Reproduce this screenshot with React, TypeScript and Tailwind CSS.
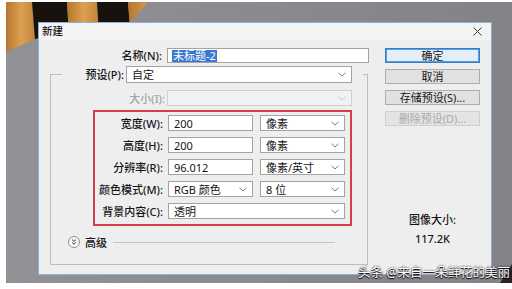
import React from "react";

const Chevron = ({ color = "#7a7a7a" }: { color?: string }) => (
  <svg width="8" height="5" viewBox="0 0 8 5" className="shrink-0">
    <path d="M0.5 0.8 L4 4 L7.5 0.8" fill="none" stroke={color} strokeWidth="1" />
  </svg>
);

function Box({
  className = "",
  children,
  chevron = false,
  disabled = false,
}: {
  className?: string;
  children?: React.ReactNode;
  chevron?: boolean;
  disabled?: boolean;
}) {
  return (
    <div
      className={`flex h-[16px] shrink-0 items-center justify-between border pl-[5px] pr-[5px] text-[11px] leading-none text-[#161616] ${
        disabled ? "border-[#cfcfcf] bg-[#f1f1f1]" : "border-[#a3a3a3] bg-white"
      } ${className}`}
    >
      <span className="whitespace-nowrap">{children}</span>
      {chevron && <Chevron color={disabled ? "#c6c6c6" : "#7a7a7a"} />}
    </div>
  );
}

function Button({
  children,
  primary = false,
  disabled = false,
}: {
  children: React.ReactNode;
  primary?: boolean;
  disabled?: boolean;
}) {
  return (
    <div
      className={`flex h-[15px] items-center justify-center border text-[11px] leading-none ${
        primary
          ? "border-[#2f7fd0] bg-[#e3eef9] text-[#161616] shadow-[inset_0_0_0_1px_#5b9be0]"
          : disabled
          ? "border-[#d0d0d0] bg-[#e4e4e4] text-[#a9a9a9]"
          : "border-[#adadad] bg-[#e1e1e1] text-[#161616]"
      }`}
    >
      {children}
    </div>
  );
}

const rows = [
  { label: "宽度(W):", value: "200", unit: "像素", select: false },
  { label: "高度(H):", value: "200", unit: "像素", select: false },
  { label: "分辨率(R):", value: "96.012", unit: "像素/英寸", select: false },
  { label: "颜色模式(M):", value: "RGB 颜色", unit: "8 位", select: true },
];

function Backdrop() {
  return (
    <svg className="absolute inset-0" width="506" height="281" viewBox="0 0 506 281">
      <defs>
        <linearGradient id="wood" x1="0" y1="0" x2="1" y2="0">
          <stop offset="0" stopColor="#b7762f" />
          <stop offset="0.5" stopColor="#dba052" />
          <stop offset="1" stopColor="#c0813a" />
        </linearGradient>
        <clipPath id="region">
          <polygon points="0,0 142,0 124,20 32,20 32,36 0,50" />
        </clipPath>
        <linearGradient id="shade" x1="0" y1="0" x2="1" y2="0">
          <stop offset="0" stopColor="#929195" />
          <stop offset="1" stopColor="#838287" />
        </linearGradient>
      </defs>
      <rect width="506" height="281" fill="url(#shade)" />
      <g clipPath="url(#region)">
        <polygon points="0,0 26,0 30,50 0,50" fill="url(#wood)" />
        <polygon points="26,0 61,0 64,50 30,50" fill="#17120e" />
        <polygon points="61,0 91,0 94,50 64,50" fill="url(#wood)" />
        <polygon points="91,0 122,0 126,50 94,50" fill="#17120e" />
        <polygon points="122,0 170,0 170,50 126,50" fill="url(#wood)" />
      </g>
      <polygon points="494,281 506,262 506,281" fill="#2a2224" />
    </svg>
  );
}

export default function App() {
  return (
    <div className="h-[289px] w-[512px] overflow-hidden bg-white pl-[6px] pt-[2px] font-['Noto_Sans','Noto_Sans_CJK_SC',sans-serif]">
      <div className="relative h-[281px] w-[506px] pl-[32px] pt-[20px]">
        <Backdrop />

        {/* dialog */}
        <div className="relative flex h-[253px] w-[454px] flex-col border border-[#8fb0d6] bg-[#eeeeee]">
          <div className="flex h-[17px] items-center justify-between bg-[#f3f3f3] pl-[3px] pr-[9px]">
            <span className="text-[10.5px] font-medium leading-none text-[#161616]">新建</span>
            <svg width="9" height="9" viewBox="0 0 9 9">
              <path d="M0.5 0.5 L8.5 8.5 M8.5 0.5 L0.5 8.5" stroke="#3a3a3a" strokeWidth="1" />
            </svg>
          </div>

          <div className="flex flex-1">
            {/* left column */}
            <div className="flex w-[346px] flex-col">
              <div className="mt-[8px] flex items-center">
                <div className="w-[124px] pr-[1px] text-right text-[11px] font-medium leading-none text-[#161616]">名称(N):</div>
                <div className="ml-[4px] flex h-[15px] w-[202px] items-center border border-[#a3a3a3] bg-white pl-[4px]">
                  <span className="bg-[#3a78d0] px-[1px] text-[11px] leading-[12px] text-white">未标题-2</span>
                </div>
              </div>

              <fieldset className="ml-[11px] mt-[3px] w-[318px] border border-[#bdbdbd] pb-[15px] pl-[11px]">
                <legend className="flex w-[301px] items-center">
                  <div className="w-[62px] text-right text-[11px] font-medium leading-none text-[#161616]">预设(P):</div>
                  <Box chevron className="ml-[2px] h-[17px] w-[226px]">
                    自定
                  </Box>
                </legend>

                <div className="mt-[7px] flex items-center">
                  <div className="w-[103px] text-right text-[11px] font-medium leading-none text-[#a3a3a3]">大小(I):</div>
                  <Box chevron disabled className="ml-[2px] w-[185px]" />
                </div>

                <div className="ml-[31px] mt-[4px] flex w-[259px] flex-col gap-[6px] border-2 border-[#d43e49] pb-[5px] pt-[3px]">
                  {rows.map((r) => (
                    <div key={r.label} className="flex items-center">
                      <div className="w-[68px] whitespace-nowrap text-right text-[11px] font-medium leading-none text-[#161616]">{r.label}</div>
                      <Box chevron={r.select} className="ml-[5px] w-[85px]">
                        {r.value}
                      </Box>
                      <Box chevron className="ml-[7px] w-[85px]">
                        {r.unit}
                      </Box>
                    </div>
                  ))}
                  <div className="flex items-center">
                    <div className="w-[68px] whitespace-nowrap text-right text-[11px] font-medium leading-none text-[#161616]">背景内容(C):</div>
                    <Box chevron className="ml-[5px] w-[177px]">
                      透明
                    </Box>
                  </div>
                </div>

                <div className="ml-[6px] mt-[9px] flex h-[14px] items-center">
                  <svg width="12" height="12" viewBox="0 0 12 12" className="shrink-0">
                    <circle cx="6" cy="6" r="5.5" fill="#fafafa" stroke="#8d8d8d" />
                    <path d="M4 3.6 L6 5.4 L8 3.6 M4 6.4 L6 8.2 L8 6.4" fill="none" stroke="#3a3a3a" strokeWidth="1" />
                  </svg>
                  <span className="ml-[5px] text-[11px] font-medium leading-none text-[#161616]">高级</span>
                  <div className="ml-[6px] h-px w-[222px] bg-[#c4c4c4]" />
                </div>
              </fieldset>
            </div>

            {/* right column */}
            <div className="flex w-[95px] flex-col">
              <div className="mt-[8px] flex flex-col gap-[6px]">
                <Button primary>确定</Button>
                <Button>取消</Button>
                <Button>存储预设(S)...</Button>
                <Button disabled>删除预设(D)...</Button>
              </div>
              <div className="mt-[87px] text-center text-[11px] font-medium leading-[14px] text-[#161616]">图像大小:</div>
              <div className="mt-[5px] text-center text-[11px] font-medium leading-[14px] text-[#161616]">117.2K</div>
            </div>
          </div>
        </div>

        <div className="absolute bottom-[4px] right-[2px] text-[12.5px] leading-none text-white [text-shadow:0_0_2px_#000,0_1px_1px_#000]">
          头条 @来自一朵鲜花的美丽
        </div>
      </div>
    </div>
  );
}
